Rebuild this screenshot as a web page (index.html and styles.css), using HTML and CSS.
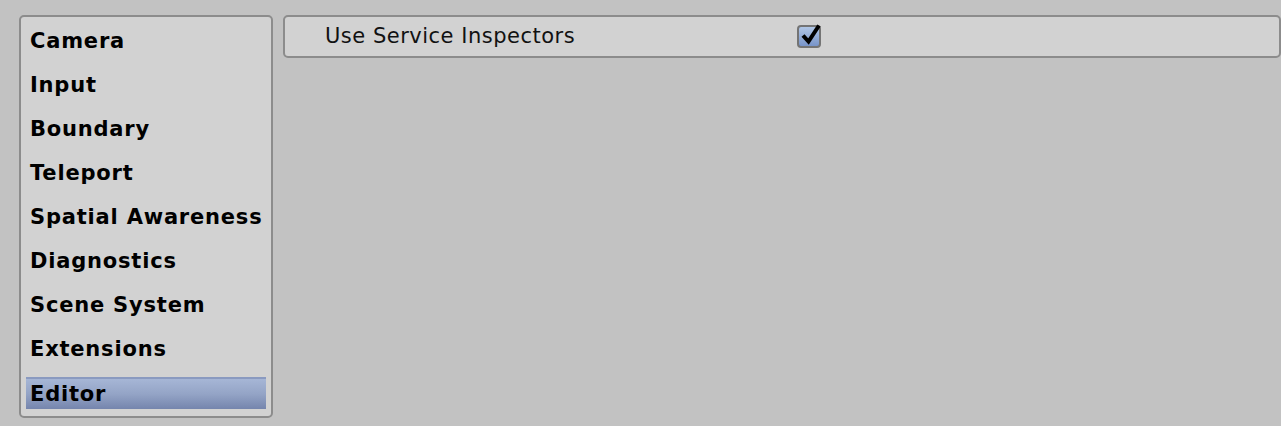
FILE: index.html
```html
<!DOCTYPE html>
<html>
<head>
<meta charset="utf-8">
<link rel="stylesheet" href="styles.css">
</head>
<body>
<div class="layout">
  <nav class="sidebar">
    <div class="item">Camera</div>
    <div class="item">Input</div>
    <div class="item">Boundary</div>
    <div class="item">Teleport</div>
    <div class="item">Spatial Awareness</div>
    <div class="item">Diagnostics</div>
    <div class="item">Scene System</div>
    <div class="item">Extensions</div>
    <div class="item selected">Editor</div>
  </nav>
  <div class="content">
    <div class="row">
      <span class="label">Use Service Inspectors</span>
      <span class="checkbox">
        <svg width="26" height="26" viewBox="0 0 26 26"><path d="M5 13.5 L10.5 19.5 L21 3.5" fill="none" stroke="#000" stroke-width="4" stroke-linecap="butt" stroke-linejoin="miter"/></svg>
      </span>
    </div>
  </div>
</div>
</body>
</html>
```
FILE: styles.css
```css
html, body {
  margin: 0;
  padding: 0;
  background: #c2c2c2;
  height: 100%;
}
.layout {
  display: flex;
  align-items: flex-start;
  gap: 10px;
  padding: 15px 0 0 19px;
}
.sidebar {
  box-sizing: border-box;
  width: 254px;
  height: 403px;
  background: #d2d2d2;
  border: 2px solid #8c8c8c;
  border-radius: 5px;
  padding: 8px 5px 0 5px;
  display: flex;
  flex-direction: column;
  gap: 12px;
}
.item {
  height: 32px;
  line-height: 32px;
  padding-left: 4px;
  font-family: "DejaVu Sans", Verdana, sans-serif;
  font-weight: bold;
  font-size: 21px;
  letter-spacing: 0.8px;
  color: #000;
  white-space: nowrap;
}
.item.selected {
  background: linear-gradient(to bottom, #a6b6d6 0%, #94a4c6 50%, #7585ad 100%);
  border-top: 2px solid #8a9ac0;
  height: 30px;
  line-height: 30px;
}
.content {
  flex: 1;
}
.row {
  box-sizing: border-box;
  width: 998px;
  height: 43px;
  background: #d2d2d2;
  border: 2px solid #8c8c8c;
  border-radius: 5px;
  display: flex;
  align-items: center;
}
.label {
  font-family: "DejaVu Sans", Verdana, sans-serif;
  font-size: 21px;
  letter-spacing: 0.5px;
  color: #111;
  margin-left: 40px;
  width: 472px;
  position: relative;
  top: -1px;
}
.checkbox {
  position: relative;
  box-sizing: border-box;
  width: 24px;
  height: 23px;
  border: 2px solid #747474;
  border-radius: 4px;
  background: linear-gradient(to bottom, #b0c6e6, #7894c8);
}
.checkbox svg {
  position: absolute;
  left: -1px;
  top: -5px;
}
```
